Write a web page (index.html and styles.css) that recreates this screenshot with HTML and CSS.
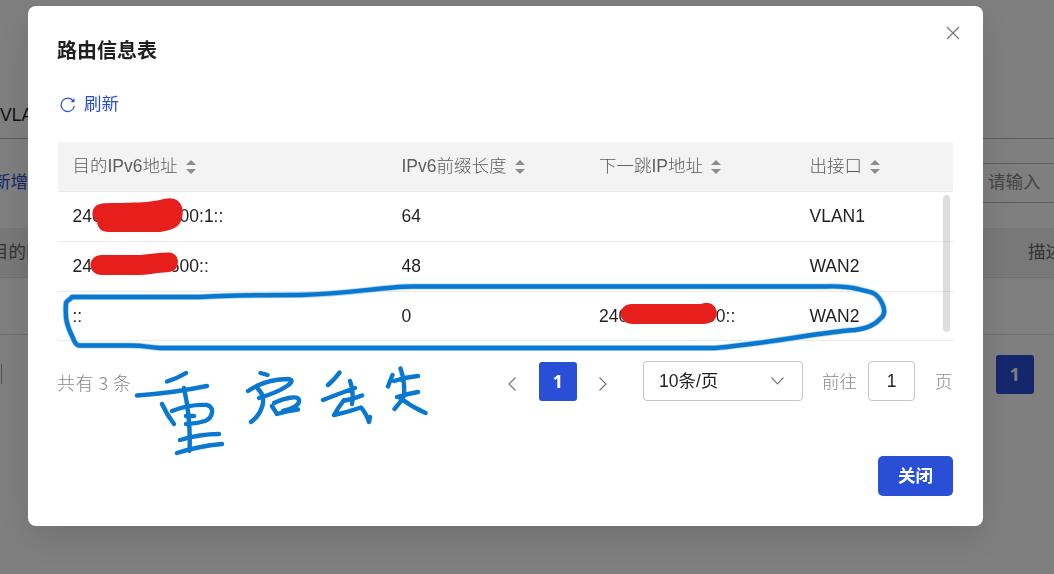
FILE: index.html
```
<!DOCTYPE html>
<html lang="zh-CN">
<head>
  <meta charset="UTF-8" />
  <meta name="viewport" content="width=device-width, initial-scale=1.0" />
  <title>路由信息表</title>
  <link rel="stylesheet" href="styles.css">
</head>
<body>

  <div class="page">
    <div class="tabs">VLAN</div>
    <div class="toolbar">
      <a class="add">新增</a>
      <div class="search">请输入</div>
    </div>
    <div class="page-head">
      <span>目的IP</span>
      <span class="desc">描述</span>
    </div>
    <div class="page-row"></div>
    <div class="page-foot">
      <span class="divider"></span>
      <span class="page-num">1</span>
    </div>
  </div>

  <div class="mask">
    <div class="dialog">
      <div class="dialog-head">
        <h2>路由信息表</h2>
        <svg class="close" viewBox="0 0 14 14"><path d="M1 1L13 13M13 1L1 13"/></svg>
      </div>

      <a class="refresh">
        <svg viewBox="0 0 16 16"><path d="M13.2 3.8A6.7 6.7 0 1 0 14.4 9.200"/><path class="tip" d="M14.5 1.3V5.2H10.600Z"/></svg>
        刷新
      </a>

      <div class="table">
        <div class="row thead">
          <div>目的IPv6地址<i class="sort"></i></div>
          <div>IPv6前缀长度<i class="sort"></i></div>
          <div>下一跳IP地址<i class="sort"></i></div>
          <div>出接口<i class="sort"></i></div>
        </div>
        <div class="row">
          <div>2400000000600:1::</div>
          <div>64</div>
          <div></div>
          <div>VLAN1</div>
        </div>
        <div class="row">
          <div>2400000000600::</div>
          <div>48</div>
          <div></div>
          <div>WAN2</div>
        </div>
        <div class="row">
          <div>::</div>
          <div>0</div>
          <div>2400000000000::</div>
          <div>WAN2</div>
        </div>
        <span class="scrollbar"></span>
      </div>

      <div class="pager">
        <span class="total">共有 3 条</span>
        <svg class="arrow prev" viewBox="0 0 8 14"><path d="M7.5 .5L1 7L7.5 13.5"/></svg>
        <span class="page-num">1</span>
        <svg class="arrow next" viewBox="0 0 8 14"><path d="M.5 .5L7 7L.5 13.5"/></svg>
        <div class="select">
          10条/页
          <svg viewBox="0 0 13 8"><path d="M.5 .5L6.5 6.8L12.5 .5"/></svg>
        </div>
        <span class="goto">前往</span>
        <span class="goto-input">1</span>
        <span class="goto-unit">页</span>
      </div>

      <div class="dialog-foot">
        <button class="btn">关闭</button>
      </div>
    </div>
  </div>

  <svg class="ink" viewBox="0 0 1054 574">
    <!-- redacted addresses -->
    <g class="redact">
      <path d="M102 203.500C115 202.500 145 203.500 160 200C167 198 173 197 178 201C183 205 184 214 181 221C178 228 171 230 160 232H109C101 232 98 228 97 222C90 216 91 205 102 203.500Z"/>
      <path d="M101 255H140C150 254 158 252.500 168 252.500C176 252 179 259 177.500 265C176 271 171 272 164 272.500C155 273 147 275 138 275H101C87 274 87 256 101 255Z"/>
      <path d="M631 304H700C705 303 709 302 713 305C718 309 718 317 713 321C710 323 707 324 703 324H632C617 323 617 305 631 304Z"/>
    </g>
    <g class="pen halo">
      <path d="M72 297H200C225 295 250 295 300 295C350 294 380 287 411 286.500H825C838 286 850 287 858 289C868 292 874 291 879 298C886 308 885 315 881 318C875 325 868 328 855 330C820 332 780 342 715 348H160C145 347 145 345.500 130 345.500H79C76 345 74 341 73 338C66 324 65 317 66 303C67 300 70 300 72 297Z"/>
    </g>
    <g class="pen">
      <path d="M72 297H200C225 295 250 295 300 295C350 294 380 287 411 286.500H825C838 286 850 287 858 289C868 292 874 291 879 298C886 308 885 315 881 318C875 325 868 328 855 330C820 332 780 342 715 348H160C145 347 145 345.500 130 345.500H79C76 345 74 341 73 338C66 324 65 317 66 303C67 300 70 300 72 297Z"/>
      <!-- 重 -->
      <path d="M167 381.500Q178 378 186 373M137 395.500Q173 393 207 386M162 404Q167 415 174 424M172 411Q190 404 207 405C215 407 213 418 205 421Q196 424 186 424M184 388Q191 420 189.500 451M186 416H194M180 440Q200 434 219 434M177 453Q199 446 222 444"/>
      <!-- 启 -->
      <path d="M260.500 373L267.500 375M248 391C260 383 272 379 288 379C299 380 283 391 259 398M258 389C268 398 262 414 251 422M272 406L277 414M274 403C284 398 298 395 299 400C300 405 292 409 283 411M277 414Q287 411 298 409.500"/>
      <!-- 丢 -->
      <path d="M339.500 372.500Q335 379 328 385M323 400Q338 394 355 388M350 381Q354 391 352 404M345 400.500Q354 399 362 395.500M344 400Q338 408 334 415Q348 412 361 407.500Q366 413 369 422L370 417"/>
      <!-- 失 -->
      <path d="M392.500 375Q390 381 388 386.500M394 381Q406 377 418 376M400.500 368.500Q405 380 404 396M397 397Q407 394 418 392M404 396Q400 403 394.500 409M400 398Q412 407 425.500 413"/>
    </g>
  </svg>

</body>
</html>
```
FILE: styles.css
```
* {
  box-sizing: border-box;
}

html, body {
  margin: 0;
  height: 100%;
  overflow: hidden;
  font-family: "Liberation Sans", "Noto Sans CJK SC", sans-serif;
  font-size: 17.5px;
  line-height: 20px;
  color: #1f1f1f;
  background: #fff;
}

svg {
  fill: none;
  stroke: #777;
  stroke-width: 1.2;
}

/* page under the mask */
.page {
  height: 574px;
  overflow: hidden;
}

.tabs {
  height: 139px;
  padding-top: 105px;
  border-bottom: 1px solid #bbb;
}

.toolbar {
  display: flex;
  height: 89px;
  justify-content: space-between;
  padding-top: 24px;
}

.add {
  margin: 9px 0 0 -7px;
  color: #2a4fd7;
}

.search {
  width: 140px;
  height: 40px;
  margin-right: -60px;
  padding: 8px 13px;
  border: 1px solid #bbb;
  color: #888;
}

.page-head {
  display: flex;
  justify-content: space-between;
  height: 50px;
  padding: 14px 0 0;
  margin: 0 -9px;
  background: #f0f0f0;
  border-bottom: 1px solid #e4e4e4;
  color: #666;
}

.page-row {
  height: 57px;
  border-bottom: 1px solid #e0e0e0;
}

.page-foot {
  display: flex;
  justify-content: space-between;
  padding: 20px 20px 0 1px;
}

.divider {
  width: 1px;
  height: 20px;
  margin-top: 9px;
  background: #aaa;
}

.page-num {
  width: 38.5px;
  height: 39px;
  border-radius: 3px;
  background: #2a4fd7;
  color: #fff;
  font: bold 17.5px/38px "Open Sans", sans-serif;
  text-align: center;
}

.mask {
  position: fixed;
  inset: 0;
  padding: 6px 0 0 28px;
  background: rgba(0, 0, 0, 0.5);
}

.dialog {
  width: 955px;
  height: 520px;
  padding: 0 30px;
  border-radius: 8px;
  background: #fff;
  box-shadow: 0 12px 36px rgba(0, 0, 0, 0.12);
}

.dialog-head {
  display: flex;
  justify-content: space-between;
  height: 88px;
}

h2 {
  margin: 30px 0 0 -1px;
  font-size: 20px;
  line-height: 30px;
}

.close {
  width: 14px;
  height: 14px;
  margin: 20px -7px 0 0;
}

.refresh {
  display: flex;
  align-items: center;
  gap: 8px;
  height: 20px;
  color: #2a4fd7;
}

.refresh svg {
  width: 16px;
  height: 16px;
  margin: 2px 0 0 2px;
  stroke: #2a4fd7;
}

.refresh .tip {
  fill: #2a4fd7;
  stroke: none;
}

.table {
  position: relative;
  margin-top: 28px;
}

.row {
  display: grid;
  grid-template-columns: 329px 197.5px 210.5px 158px;
  align-items: center;
  height: 50px;
  padding-bottom: 2px;
  border-bottom: 1px solid #e9e9eb;
  white-space: nowrap;
}

.row:nth-child(4) {
  height: 49px;
  padding-bottom: 1px;
}

.row > div {
  padding-left: 14.5px;
}

.thead {
  background: #f3f3f3;
  color: #5c5c5c;
  font-weight: 300;
}

.thead > div {
  display: flex;
  align-items: center;
}

.sort {
  display: grid;
  gap: 4px;
  margin: 3px 0 0 8px;
}

.sort::before,
.sort::after {
  content: "";
  border: 5px solid transparent;
}

.sort::before {
  border-top: 0;
  border-bottom-color: #8c8c8c;
}

.sort::after {
  border-bottom: 0;
  border-top-color: #8c8c8c;
}

.scrollbar {
  position: absolute;
  top: 53px;
  right: 3px;
  width: 7px;
  height: 137px;
  border-radius: 4px;
  background: rgba(144, 147, 153, 0.3);
}

.pager {
  display: flex;
  align-items: center;
  height: 40px;
  margin-top: 20px;
}

.total,
.goto,
.goto-unit {
  padding-top: 2px;
  color: #888;
  font-weight: 300;
}

.total {
  width: 451px;
  margin-left: -1px;
  font-family: "Noto Sans CJK SC", sans-serif;
  font-size: 18px;
  letter-spacing: 0.5px;
}

.arrow {
  width: 8px;
  height: 14px;
  margin-top: 5px;
}

.prev {
  margin-right: 22.5px;
}

.next {
  margin: 5px 36px 0 22px;
}

.select {
  display: flex;
  align-items: center;
  justify-content: space-between;
  width: 160px;
  height: 40px;
  padding: 0 18px 0 15px;
  border: 1px solid #c6c6c6;
  border-radius: 4px;
}

.select svg {
  width: 13px;
  height: 8px;
}

.goto {
  margin: 0 11px 0 19px;
}

.goto-input {
  width: 47px;
  height: 40px;
  border: 1px solid #c6c6c6;
  border-radius: 4px;
  line-height: 38px;
  text-align: center;
}

.goto-unit {
  margin-left: 20px;
}

.dialog-foot {
  display: flex;
  justify-content: flex-end;
  margin-top: 55px;
}

.btn {
  width: 75px;
  height: 40px;
  border: none;
  border-radius: 5px;
  background: #2a4fd7;
  color: #fff;
  font: bold 17.5px/36px "Noto Sans CJK SC", sans-serif;
  padding-bottom: 3px;
}

/* hand-drawn marks over the dialog */
.ink {
  position: fixed;
  inset: 0;
  width: 1054px;
  height: 574px;
  pointer-events: none;
}

.redact {
  fill: #e61e1c;
  stroke: none;
}

.pen {
  stroke: #0b78d0;
  stroke-width: 4.4;
  stroke-linecap: round;
  stroke-linejoin: round;
}

.halo {
  stroke: #a9d5f5;
  stroke-width: 6;
}
```
